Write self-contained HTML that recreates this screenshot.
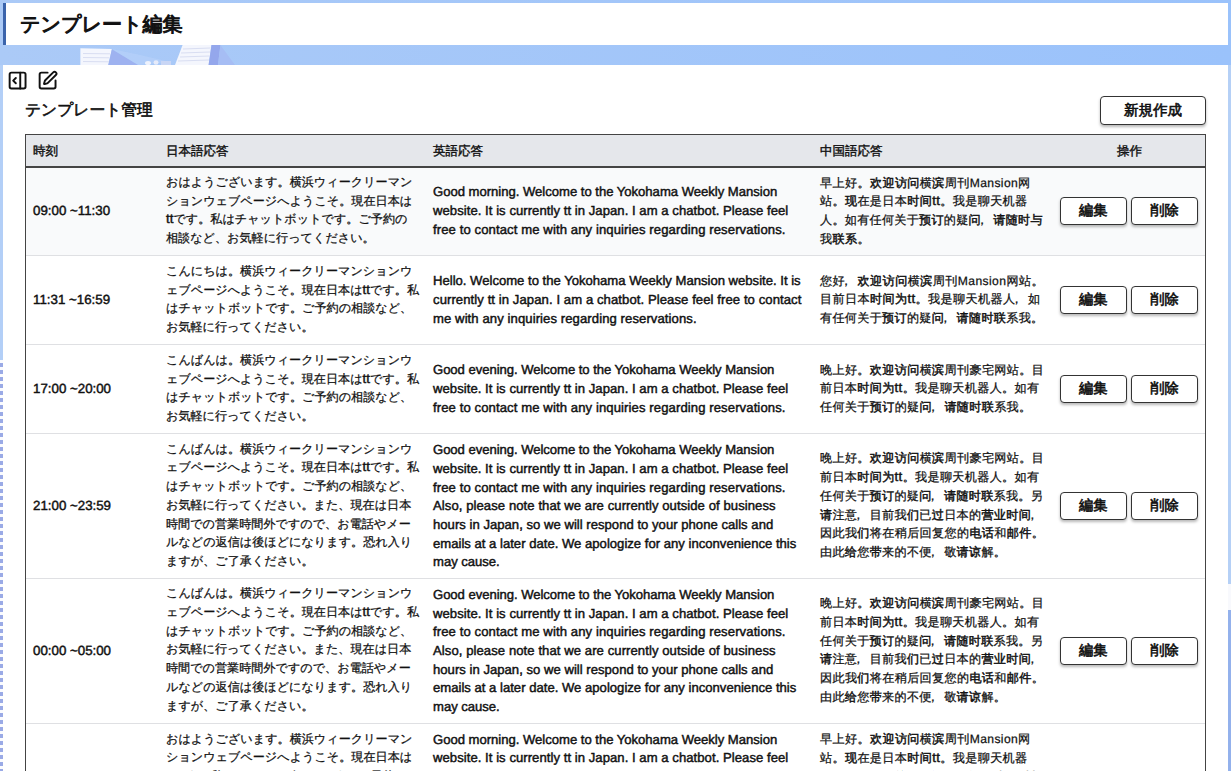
<!DOCTYPE html>
<html><head><meta charset="utf-8"><style>
*{box-sizing:border-box;margin:0;padding:0}
html,body{width:1231px;height:771px;overflow:hidden}
body{position:relative;text-rendering:geometricPrecision;background:linear-gradient(90deg,#abcaf7,#9ac2fb);font-family:"Liberation Sans",sans-serif;color:#111}
.hdr{position:absolute;left:3px;top:3px;width:1225px;height:42px;background:#fff;border-left:3px solid #3b64ac}
.hdr h1{position:absolute;left:14px;top:10px;-webkit-text-stroke:1.05px #111;font-weight:normal;font-size:20.05px;line-height:24px;white-space:nowrap}
.bgimg{position:absolute;left:0;top:44px}
.main{position:absolute;left:3px;top:64.6px;width:1225px;height:720px;background:#fff}
.ic{position:absolute}
.sub{position:absolute;left:25px;top:101px;-webkit-text-stroke:0.6px #111;font-size:15.75px;line-height:20px;white-space:nowrap}
.newbtn{position:absolute;left:1100px;top:96px;width:106px;height:28.5px;border:1.6px solid #333;border-radius:4px;background:#fff;box-shadow:0 2px 3px rgba(0,0,0,.28);font-size:14.5px;text-align:center;line-height:28px;-webkit-text-stroke:0.6px #111}
.tbl{position:absolute;left:25px;top:133.5px;width:1181px;height:700px;border:1.3px solid #444;overflow:hidden}
.thead{position:absolute;left:0;top:0;width:100%;height:33px;background:#e5e7eb;border-bottom:2px solid #444}
.th{position:absolute;top:8px;-webkit-text-stroke:0.4px #111;font-size:12.5px;line-height:16px;white-space:nowrap}
.row{position:absolute;left:0;width:100%;border-bottom:1px solid #dfe0e3}
.c{position:absolute;top:50%;transform:translateY(-50%);white-space:nowrap;line-height:18.7px}
.t{left:7px;font-size:13.3px;-webkit-text-stroke:0.45px #111}
.jp{top:calc(50% - 1.5px);left:140px;font-size:12.12px;-webkit-text-stroke:0.25px #111}
.en{left:407px;font-size:13.1px;-webkit-text-stroke:0.45px #111}
.cn{top:calc(50% - 0.7px);left:794px;font-size:12.12px;-webkit-text-stroke:0.25px #111}
.cn b{font-weight:normal;-webkit-text-stroke:0.45px #111}
.ops{left:1034px;width:140px;height:28px;line-height:0}
.btn{position:absolute;left:0;top:0;width:66.6px;height:28px;border:1.6px solid #333;border-radius:4px;background:#fff;box-shadow:0 2px 3px rgba(0,0,0,.28);font-size:14.3px;text-align:center;line-height:27px;-webkit-text-stroke:0.6px #111}
.b2{left:71.2px}
.tt{font-size:13.3px;-webkit-text-stroke:0.45px #111}
.cm{position:relative;left:-5px}
.c.tp{transform:none;top:7px}
.c.jp.tp{top:6px}
.c.cn.tp{top:6.5px}
</style></head><body>
<svg class="bgimg" width="260" height="21" viewBox="0 44 260 21">
<polygon points="80.4,48.2 111.9,49 108.3,65 80.4,65" fill="#f4f6fd"/>
<line x1="83" y1="53.5" x2="110" y2="53.8" stroke="#d9def2" stroke-width="1"/>
<line x1="83" y1="57.5" x2="109.5" y2="57.8" stroke="#d9def2" stroke-width="1"/>
<line x1="83" y1="61.5" x2="109" y2="61.8" stroke="#d9def2" stroke-width="1"/>
<polygon points="111.9,49.3 138.2,65 108.3,65" fill="#9eb2f0"/>
<polygon points="111.9,49 140,55 170,62 138.2,65" fill="#b9d2fa" opacity="0.6"/>
<ellipse cx="148" cy="63" rx="3" ry="2" fill="#eef2fc"/>
<ellipse cx="156" cy="62.5" rx="2.5" ry="2.2" fill="#e6ebfa"/>
<rect x="161" y="61" width="10" height="4" fill="#c9d6f5"/>
<polygon points="182.6,45 211.5,45 208.6,65 175,65" fill="#f4f6fd"/>
<line x1="183" y1="49" x2="210.5" y2="48" stroke="#d9def2" stroke-width="1"/>
<line x1="181" y1="53" x2="210" y2="52" stroke="#d9def2" stroke-width="1"/>
<line x1="180" y1="57" x2="209.5" y2="56" stroke="#d9def2" stroke-width="1"/>
<line x1="178" y1="61" x2="209" y2="60" stroke="#d9def2" stroke-width="1"/>
<polygon points="211.5,45 220.4,45 218,65 208.6,65" fill="#94a7ec"/>
<polygon points="220.4,45 235,65 218,65" fill="#a6bdf4"/>
</svg>
<div style="position:absolute;left:0;top:65px;width:3px;height:295px;background:#b3cff7"></div>
<div style="position:absolute;left:0;top:360px;width:3px;height:411px;background:repeating-linear-gradient(180deg,#fafbfe 0,#fafbfe 3px,#9aaae6 3px,#9aaae6 7px)"></div>
<div style="position:absolute;left:1228px;top:65px;width:3px;height:519px;background:#b5d0f6"></div>
<div style="position:absolute;left:1228px;top:584px;width:3px;height:26px;background:#f8f9fd"></div>
<div style="position:absolute;left:1228px;top:610px;width:3px;height:161px;background:#93b1ec"></div>
<div class="hdr"><h1>テンプレート編集</h1></div>
<div class="main"></div>
<svg class="ic" style="left:6.8px;top:69.5px" width="21.2" height="21.2" viewBox="0 0 24 24" fill="none" stroke="#111" stroke-width="2.2" stroke-linecap="round" stroke-linejoin="round"><rect width="18" height="18" x="3" y="3" rx="2"/><path d="M15 3v18"/><path d="m10 15-3-3 3-3"/></svg>
<svg class="ic" style="left:36.8px;top:69.9px" width="21.2" height="21.2" viewBox="0 0 24 24" fill="none" stroke="#111" stroke-width="2.2" stroke-linecap="round" stroke-linejoin="round"><path d="M12 3H5a2 2 0 0 0-2 2v14a2 2 0 0 0 2 2h14a2 2 0 0 0 2-2v-7"/><path d="M18.375 2.625a1 1 0 0 1 3 3l-9.013 9.014a2 2 0 0 1-.853.505l-2.873.84a.5.5 0 0 1-.62-.62l.84-2.873a2 2 0 0 1 .506-.852z"/></svg>
<div class="sub">テンプレート管理</div>
<div class="newbtn">新規作成</div>
<div class="tbl">
<div class="thead">
<div class="th" style="left:7px">時刻</div>
<div class="th" style="left:140px">日本語応答</div>
<div class="th" style="left:407px">英語応答</div>
<div class="th" style="left:794px">中国語応答</div>
<div class="th" style="left:1091px">操作</div>
</div>
<div class="row" style="top:33.00px;height:88.90px;background:#f9fafb">
<div class="c t">09:00 ~11:30</div>
<div class="c jp"><span class="l">おはようございます。横浜ウィークリーマン</span><br><span class="l">ションウェブページへようこそ。現在日本は</span><br><span class="l"><span class="tt">tt</span>です。私はチャットボットです。ご予約の</span><br><span class="l">相談など、お気軽に行ってください。</span></div>
<div class="c en"><span class="l" style="letter-spacing:-0.020px">Good morning. Welcome to the Yokohama Weekly Mansion</span><br><span class="l" style="letter-spacing:0.047px">website. It is currently tt in Japan. I am a chatbot. Please feel</span><br><span class="l" style="letter-spacing:0.100px">free to contact me with any inquiries regarding reservations.</span></div>
<div class="c cn"><span class="l" style="letter-spacing:0.368px">早上好。<b>欢迎访问</b>横<b>滨</b>周刊Mansion网</span><br><span class="l" style="letter-spacing:0.353px">站。<b>现</b>在是日本<b>时间</b><span class="tt">tt</span>。我是聊天机器</span><br><span class="l" style="letter-spacing:0.271px">人。如有任何关于<b>预订</b>的疑<b>问</b><span class="cm">，</span><b>请随时与</b></span><br><span class="l" style="letter-spacing:0.400px">我<b>联系</b>。</span></div>
<div class="c ops"><span class="btn">編集</span><span class="btn b2">削除</span></div>
</div>
<div class="row" style="top:121.90px;height:88.90px;background:#fff">
<div class="c t">11:31 ~16:59</div>
<div class="c jp"><span class="l">こんにちは。横浜ウィークリーマンションウ</span><br><span class="l">ェブページへようこそ。現在日本は<span class="tt">tt</span>です。私</span><br><span class="l">はチャットボットです。ご予約の相談など、</span><br><span class="l">お気軽に行ってください。</span></div>
<div class="c en"><span class="l" style="letter-spacing:-0.003px">Hello. Welcome to the Yokohama Weekly Mansion website. It is</span><br><span class="l" style="letter-spacing:0.080px">currently tt in Japan. I am a chatbot. Please feel free to contact</span><br><span class="l" style="letter-spacing:0.086px">me with any inquiries regarding reservations.</span></div>
<div class="c cn"><span class="l" style="letter-spacing:0.410px">您好<span class="cm">，</span><b>欢迎访问</b>横<b>滨</b>周刊Mansion网站。</span><br><span class="l" style="letter-spacing:0.378px">目前日本<b>时间为</b><span class="tt">tt</span>。我是聊天机器人<span class="cm">，</span>如</span><br><span class="l" style="letter-spacing:0.306px">有任何关于<b>预订</b>的疑<b>问</b><span class="cm">，</span><b>请随时联</b>系我。</span></div>
<div class="c ops"><span class="btn">編集</span><span class="btn b2">削除</span></div>
</div>
<div class="row" style="top:210.80px;height:89.10px;background:#fff">
<div class="c t">17:00 ~20:00</div>
<div class="c jp"><span class="l">こんばんは。横浜ウィークリーマンションウ</span><br><span class="l">ェブページへようこそ。現在日本は<span class="tt">tt</span>です。私</span><br><span class="l">はチャットボットです。ご予約の相談など、</span><br><span class="l">お気軽に行ってください。</span></div>
<div class="c en"><span class="l" style="letter-spacing:-0.047px">Good evening. Welcome to the Yokohama Weekly Mansion</span><br><span class="l" style="letter-spacing:0.047px">website. It is currently tt in Japan. I am a chatbot. Please feel</span><br><span class="l" style="letter-spacing:0.100px">free to contact me with any inquiries regarding reservations.</span></div>
<div class="c cn"><span class="l" style="letter-spacing:0.341px">晚上好。<b>欢迎访问</b>横<b>滨</b>周刊豪宅网站。目</span><br><span class="l" style="letter-spacing:0.322px">前日本<b>时间为</b><span class="tt">tt</span>。我是聊天机器人。如有</span><br><span class="l" style="letter-spacing:0.325px">任何关于<b>预订</b>的疑<b>问</b><span class="cm">，</span><b>请随时联</b>系我。</span></div>
<div class="c ops"><span class="btn">編集</span><span class="btn b2">削除</span></div>
</div>
<div class="row" style="top:299.90px;height:144.60px;background:#fff">
<div class="c t">21:00 ~23:59</div>
<div class="c jp"><span class="l">こんばんは。横浜ウィークリーマンションウ</span><br><span class="l">ェブページへようこそ。現在日本は<span class="tt">tt</span>です。私</span><br><span class="l">はチャットボットです。ご予約の相談など、</span><br><span class="l">お気軽に行ってください。また、現在は日本</span><br><span class="l">時間での営業時間外ですので、お電話やメー</span><br><span class="l">ルなどの返信は後ほどになります。恐れ入り</span><br><span class="l">ますが、ご了承ください。</span></div>
<div class="c en"><span class="l" style="letter-spacing:-0.047px">Good evening. Welcome to the Yokohama Weekly Mansion</span><br><span class="l" style="letter-spacing:0.047px">website. It is currently tt in Japan. I am a chatbot. Please feel</span><br><span class="l" style="letter-spacing:0.100px">free to contact me with any inquiries regarding reservations.</span><br><span class="l" style="letter-spacing:0.072px">Also, please note that we are currently outside of business</span><br><span class="l" style="letter-spacing:0.018px">hours in Japan, so we will respond to your phone calls and</span><br><span class="l" style="letter-spacing:0.006px">emails at a later date. We apologize for any inconvenience this</span><br><span class="l" style="letter-spacing:-0.022px">may cause.</span></div>
<div class="c cn"><span class="l" style="letter-spacing:0.341px">晚上好。<b>欢迎访问</b>横<b>滨</b>周刊豪宅网站。目</span><br><span class="l" style="letter-spacing:0.322px">前日本<b>时间为</b><span class="tt">tt</span>。我是聊天机器人。如有</span><br><span class="l" style="letter-spacing:0.282px">任何关于<b>预订</b>的疑<b>问</b><span class="cm">，</span><b>请随时联</b>系我。另</span><br><span class="l" style="letter-spacing:0.306px"><b>请</b>注意<span class="cm">，</span>目前我<b>们</b>已<b>过</b>日本的<b>营业时间</b><span class="cm">，</span></span><br><span class="l" style="letter-spacing:0.341px">因此我<b>们</b>将在稍后回复您的<b>电话</b>和<b>邮件</b>。</span><br><span class="l" style="letter-spacing:0.300px">由此<b>给</b>您<b>带</b>来的不便<span class="cm">，</span>敬<b>请谅</b>解。</span></div>
<div class="c ops"><span class="btn">編集</span><span class="btn b2">削除</span></div>
</div>
<div class="row" style="top:444.50px;height:144.60px;background:#fff">
<div class="c t">00:00 ~05:00</div>
<div class="c jp"><span class="l">こんばんは。横浜ウィークリーマンションウ</span><br><span class="l">ェブページへようこそ。現在日本は<span class="tt">tt</span>です。私</span><br><span class="l">はチャットボットです。ご予約の相談など、</span><br><span class="l">お気軽に行ってください。また、現在は日本</span><br><span class="l">時間での営業時間外ですので、お電話やメー</span><br><span class="l">ルなどの返信は後ほどになります。恐れ入り</span><br><span class="l">ますが、ご了承ください。</span></div>
<div class="c en"><span class="l" style="letter-spacing:-0.047px">Good evening. Welcome to the Yokohama Weekly Mansion</span><br><span class="l" style="letter-spacing:0.047px">website. It is currently tt in Japan. I am a chatbot. Please feel</span><br><span class="l" style="letter-spacing:0.100px">free to contact me with any inquiries regarding reservations.</span><br><span class="l" style="letter-spacing:0.072px">Also, please note that we are currently outside of business</span><br><span class="l" style="letter-spacing:0.018px">hours in Japan, so we will respond to your phone calls and</span><br><span class="l" style="letter-spacing:0.006px">emails at a later date. We apologize for any inconvenience this</span><br><span class="l" style="letter-spacing:-0.022px">may cause.</span></div>
<div class="c cn"><span class="l" style="letter-spacing:0.341px">晚上好。<b>欢迎访问</b>横<b>滨</b>周刊豪宅网站。目</span><br><span class="l" style="letter-spacing:0.322px">前日本<b>时间为</b><span class="tt">tt</span>。我是聊天机器人。如有</span><br><span class="l" style="letter-spacing:0.282px">任何关于<b>预订</b>的疑<b>问</b><span class="cm">，</span><b>请随时联</b>系我。另</span><br><span class="l" style="letter-spacing:0.306px"><b>请</b>注意<span class="cm">，</span>目前我<b>们</b>已<b>过</b>日本的<b>营业时间</b><span class="cm">，</span></span><br><span class="l" style="letter-spacing:0.341px">因此我<b>们</b>将在稍后回复您的<b>电话</b>和<b>邮件</b>。</span><br><span class="l" style="letter-spacing:0.300px">由此<b>给</b>您<b>带</b>来的不便<span class="cm">，</span>敬<b>请谅</b>解。</span></div>
<div class="c ops"><span class="btn">編集</span><span class="btn b2">削除</span></div>
</div>
<div class="row" style="top:589.10px;height:88.40px;background:#fff">
<div class="c t"></div>
<div class="c jp tp"><span class="l">おはようございます。横浜ウィークリーマン</span><br><span class="l">ションウェブページへようこそ。現在日本は</span><br><span class="l"><span class="tt">tt</span>です。私はチャットボットです。ご予約の</span><br><span class="l">相談など、お気軽に行ってください。</span></div>
<div class="c en tp"><span class="l" style="letter-spacing:-0.020px">Good morning. Welcome to the Yokohama Weekly Mansion</span><br><span class="l" style="letter-spacing:0.047px">website. It is currently tt in Japan. I am a chatbot. Please feel</span><br><span class="l" style="letter-spacing:0.100px">free to contact me with any inquiries regarding reservations.</span></div>
<div class="c cn tp"><span class="l" style="letter-spacing:0.368px">早上好。<b>欢迎访问</b>横<b>滨</b>周刊Mansion网</span><br><span class="l" style="letter-spacing:0.353px">站。<b>现</b>在是日本<b>时间</b><span class="tt">tt</span>。我是聊天机器</span><br><span class="l" style="letter-spacing:0.271px">人。如有任何关于<b>预订</b>的疑<b>问</b><span class="cm">，</span><b>请随时与</b></span><br><span class="l" style="letter-spacing:0.400px">我<b>联系</b>。</span></div>
</div>
</div>
</body></html>
